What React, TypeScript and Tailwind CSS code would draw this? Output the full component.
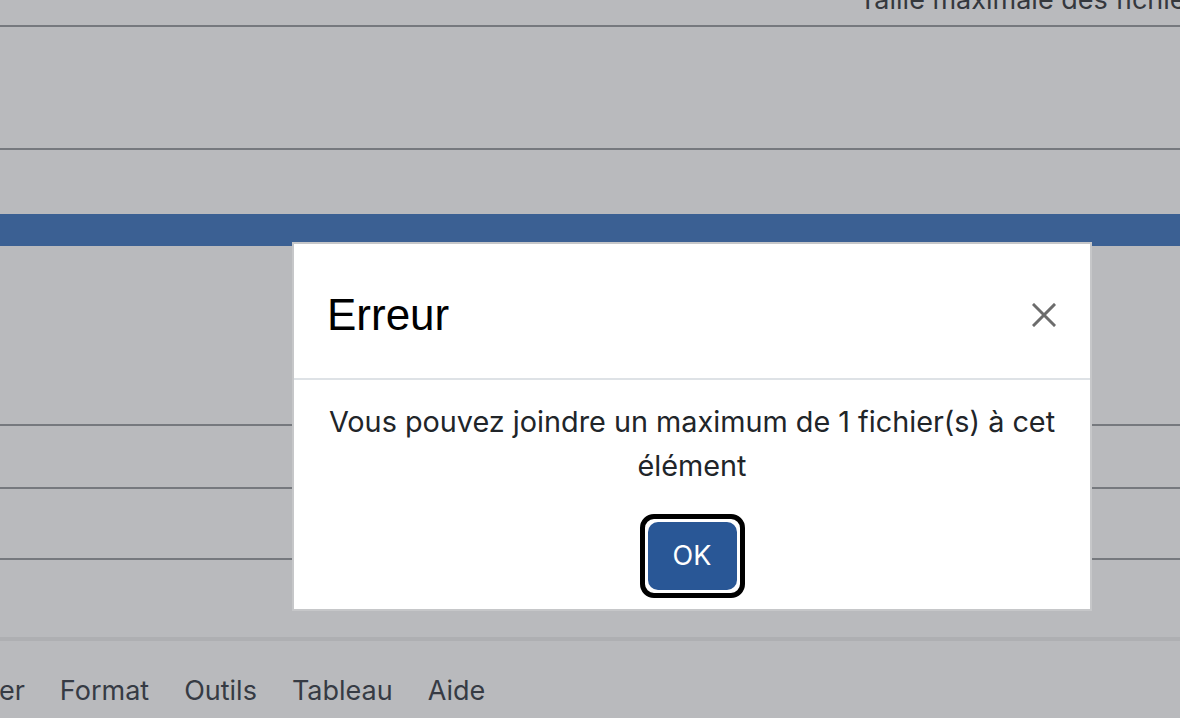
import React from "react";

export default function App() {
  const sf = { fontFamily: "Inter, 'Noto Sans', sans-serif" };
  return (
    <div className="relative w-[1180px] h-[718px] overflow-hidden bg-[#b9babd]" style={sf}>
      <div className="flex flex-col">
        <div className="h-[25px] relative overflow-hidden">
          <div className="absolute right-[-30px] top-[-18px] text-[27px] leading-[36px] text-[#35383d] whitespace-nowrap">
            Taille maximale des fichiers
          </div>
        </div>
        <div className="h-[2px] bg-[#76797e]" />
        <div className="h-[121px]" />
        <div className="h-[2px] bg-[#76797e]" />
        <div className="h-[64px]" />
        <div className="h-[32px] bg-[#3b6093]" />
        <div className="h-[178px]" />
        <div className="h-[2px] bg-[#76797e]" />
        <div className="h-[61px]" />
        <div className="h-[2px] bg-[#76797e]" />
        <div className="h-[69px]" />
        <div className="h-[2px] bg-[#76797e]" />
        <div className="h-[77px]" />
        <div className="h-[4px] bg-[#aeafb2]" />
        <div className="h-[96px] flex items-center -ml-[64px] gap-[35px] text-[27px] text-[#363b44] pt-[4px]">
          <span>Insérer</span>
          <span>Format</span>
          <span>Outils</span>
          <span>Tableau</span>
          <span>Aide</span>
        </div>
      </div>

      <div className="absolute left-[292px] top-[242px] w-[800px] h-[369px] bg-white border-2 border-[#c6c7c9] flex flex-col">
        <div className="h-[136px] flex items-center justify-between pl-[33px] pr-[34px] border-b-2 border-[#dee2e6]">
          <div className="text-[44px] text-black leading-none pt-[7px]" style={{ fontFamily: "'Liberation Sans', Arial, sans-serif" }}>
            Erreur
          </div>
          <svg width="24" height="24" viewBox="0 0 24 24" className="mt-[8px]">
            <path d="M2 2 L22 22 M22 2 L2 22" stroke="#6c6c6c" strokeWidth="3" strokeLinecap="square" />
          </svg>
        </div>
        <div className="flex flex-col items-center pt-[20px] px-[32px]">
          <p className="text-[28.8px] leading-[44px] text-[#212529] text-center">
            Vous pouvez joindre un maximum de 1 fichier(s) à cet élément
          </p>
          <div className="mt-[26px] rounded-[14px] border-[5px] border-black p-[3px] bg-white">
            <div className="w-[89px] h-[68px] rounded-[10px] bg-[#295796] flex items-center justify-center text-white text-[27px]">
              OK
            </div>
          </div>
        </div>
      </div>
    </div>
  );
}
